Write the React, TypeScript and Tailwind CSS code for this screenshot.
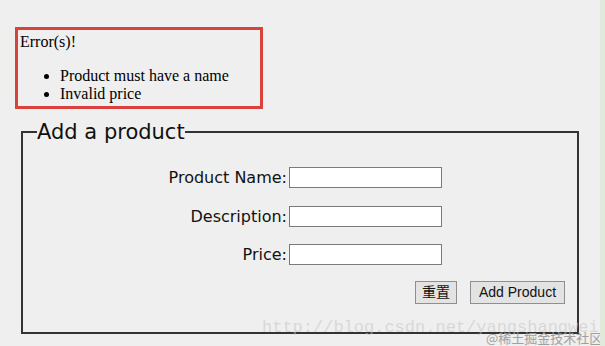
export default function App() {
  return (
    <div className="relative min-h-[346px] overflow-hidden bg-[#efefef] pt-[27px]">
      {/* Error summary */}
      <div className="ml-[15px] h-[82px] w-[248px] border-[3px] border-[#d9413c] px-[2px] pt-[3px] font-['Liberation_Serif',serif] text-[16px] leading-[18px] text-black">
        <p>Error(s)!</p>
        <ul className="mt-[16px] list-disc pl-[40px]">
          <li>Product must have a name</li>
          <li>Invalid price</li>
        </ul>
      </div>

      {/* Form */}
      <fieldset className="ml-[21px] mt-[10px] h-[215px] w-[558px] border-2 border-[#333] px-[10px] font-['DejaVu_Sans',sans-serif] text-[16px] text-[#111]">
        <legend className="ml-[4px] px-0 text-[21px] leading-[26px]">Add a product</legend>
        <div className="mt-[22px] grid grid-cols-[254px_153px] items-center gap-x-[2px] gap-y-[17.5px] leading-[21px]">
          <label className="text-right">Product Name:</label>
          <input className="h-[21px] border border-[#7a7a7a] bg-white" />
          <label className="text-right">Description:</label>
          <input className="h-[21px] border border-[#7a7a7a] bg-white" />
          <label className="text-right">Price:</label>
          <input className="h-[21px] border border-[#7a7a7a] bg-white" />
        </div>
        <div className="mt-[16px] flex justify-end gap-[13px] pr-[2px] font-['Liberation_Sans','Noto_Sans_CJK_SC',sans-serif] text-[14px] leading-[21px]">
          <button className="h-[23px] w-[42px] border border-[#8f8f8f] bg-[#e3e3e3]">重置</button>
          <button className="h-[23px] w-[95px] border border-[#8f8f8f] bg-[#e3e3e3]">Add Product</button>
        </div>
      </fieldset>

      {/* watermark */}
      <div className="pointer-events-none absolute left-[262px] top-[315px] font-['Liberation_Mono',monospace] text-[17px] text-[#c8c8c8]/60">
        http://blog.csdn.net/yangshangwei
      </div>
      <div className="pointer-events-none absolute left-[486px] top-[330px] font-['Noto_Sans_CJK_SC',sans-serif] text-[13px] leading-[16px] text-[#a0a0a0]">
        @稀土掘金技术社区
      </div>
      <div className="absolute right-0 top-0 h-full w-[5px] bg-[#dfeadb]" />
    </div>
  );
}
